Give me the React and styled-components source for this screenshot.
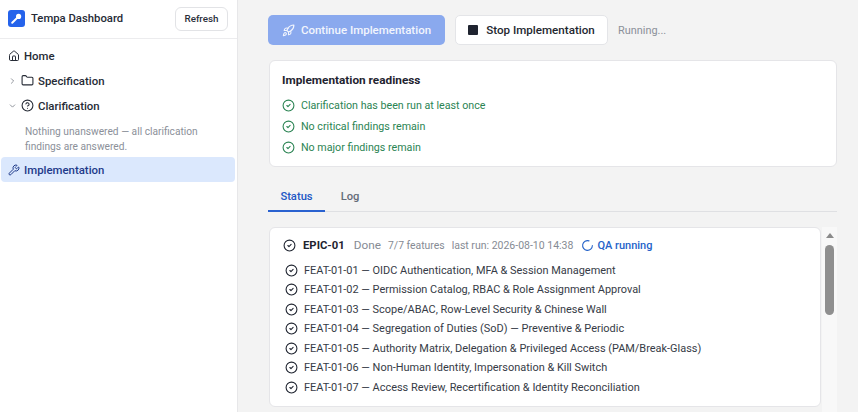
import React from "react";
import styled, { createGlobalStyle } from "styled-components";
import { House, ChevronRight, ChevronDown, Folder, CircleHelp, Wrench, Rocket, CircleCheck, LoaderCircle } from "lucide-react";

const FONT = `Roboto, "Noto Sans", sans-serif`;
const Global = createGlobalStyle`
  html, body { margin: 0; padding: 0; height: 100%; overflow: hidden; background: #f3f3f3; }
  #root { height: 100%; }
  * { box-sizing: border-box; }
`;
const Page = styled.div`
  display: flex; width: 858px; height: 412px; overflow: hidden;
  font-family: ${FONT}; font-size: 11px; color: #1f2430; background: #f3f3f3;
`;
const Sidebar = styled.aside`
  width: 238px; flex: none; background: #fff; border-right: 1px solid #e7e7e9; display: flex; flex-direction: column;
`;
const SideHeader = styled.header`
  height: 39px; flex: none; display: flex; align-items: center; justify-content: space-between;
  padding: 0 9px 1px 8px; border-bottom: 1px solid #ececee;
`;
const Brand = styled.div`display: flex; align-items: center; gap: 6px; font-size: 11.3px; font-weight: 500; color: #262b36;`;
const Logo = styled.div`
  width: 17px; height: 17px; border-radius: 3px; background: #2563eb; display: flex; align-items: center; justify-content: center;
`;
const RefreshButton = styled.button`
  width: 53px; height: 24px; background: #fff; border: 1px solid #e2e3e6; border-radius: 6px;
  font: 500 9.8px ${FONT}; color: #2a2f3a; padding: 0;
`;
const Nav = styled.nav`display: flex; flex-direction: column; padding: 4px 2px 0 1px;`;
const NavRow = styled.div`
  height: 25px; display: flex; align-items: center; gap: 4px; border-radius: 4px; font-size: 11.4px; font-weight: 500;
  padding-left: 7px;
  color: ${p => p.$active ? "#1e3a8a" : "#262b36"};
  background: ${p => p.$active ? "#dbe8fd" : "transparent"};
`;
const Caret = styled.span`width: 9px; display: flex; color: #6f747d;`;
const Note = styled.p`
  margin: 0; padding: 6px 12px 0 24px; font-size: 10.2px; line-height: 15px; color: #8b9099; height: 39px;
`;
const Main = styled.main`flex: 1; min-width: 0; padding: 15px 21px 0 30px; display: flex; flex-direction: column;`;
const Actions = styled.div`display: flex; align-items: center; gap: 10px; height: 30px;`;
const PrimaryButton = styled.button`
  width: 177px; height: 30px; border: 0; border-radius: 5px; background: #8aa9ee; color: #f2f5fd;
  display: flex; align-items: center; justify-content: center; gap: 6px; font: 500 11.5px ${FONT}; padding: 0;
`;
const StopButton = styled.button`
  width: 153px; height: 30px; border: 1px solid #e4e5e8; border-radius: 5px; background: #fff; color: #23272f;
  display: flex; align-items: center; justify-content: center; gap: 8px; font: 500 11.6px ${FONT}; padding: 0;
`;
const StopIcon = styled.span`width: 10px; height: 10px; border-radius: 1px; background: #1f2430;`;
const Status = styled.span`font-size: 10.9px; color: #8b9099;`;
const Card = styled.section`background: #fff; border: 1px solid #e5e5e8; border-radius: 6px;`;
const ReadyCard = styled(Card)`margin: 15px 0 0 1px; height: 107px; padding: 11px 12px;`;
const Title = styled.h2`margin: 0 0 7px; font-size: 11.8px; line-height: 16px; font-weight: 700; color: #1f2430;`;
const CheckRow = styled.div`
  height: 21px; display: flex; align-items: center; gap: 6px; font-size: 10.7px; color: #2b8453;
`;
const Tabs = styled.div`display: flex; margin-top: 17px; height: 28px; border-bottom: 1px solid #dfe0e3;`;
const Tab = styled.div`
  width: ${p => p.$w}px; height: 28px; text-align: center; line-height: 26px; font-size: 11.2px; font-weight: 500;
  color: ${p => p.$active ? "#2257c5" : "#646b78"}; ${p => p.$active && "border-bottom: 2px solid #2a62d0;"}
`;
const Content = styled.div`display: flex; margin-top: 15px; gap: 1px; height: 186px;`;
const EpicCard = styled(Card)`flex: 1; margin-left: 1px; height: 180px; padding: 9px 13px 0;`;
const EpicHead = styled.div`display: flex; align-items: center; height: 16px; color: #868b94; white-space: nowrap;`;
const EpicId = styled.strong`margin: 0 9px 0 7px; font-size: 11.3px; font-weight: 700; color: #1f2430;`;
const Meta = styled.span`margin-right: ${p => p.$m}px; font-size: ${p => p.$s}px;`;
const Qa = styled.span`display: flex; align-items: center; gap: 3px; color: #2563c9; font-weight: 500; font-size: 11px;`;
const FeatList = styled.div`margin-top: 7.5px; padding-left: 2px;`;
const Feat = styled.div`height: 19.5px; display: flex; align-items: center; gap: 6px; font-size: 10.95px; color: #363b46; white-space: nowrap;`;
const Scroll = styled.div`width: 15px; flex: none; background: #f8f8f8; display: flex; flex-direction: column; align-items: center; padding-top: 6px;`;
const Arrow = styled.span`width: 0; height: 0; border-left: 4px solid transparent; border-right: 4px solid transparent; border-bottom: 5px solid #8a8a8a;`;
const Thumb = styled.span`width: 9px; height: 70px; margin-top: 7px; border-radius: 5px; background: #8f8f8f;`;

const feats = [
  "FEAT-01-01 — OIDC Authentication, MFA & Session Management",
  "FEAT-01-02 — Permission Catalog, RBAC & Role Assignment Approval",
  "FEAT-01-03 — Scope/ABAC, Row-Level Security & Chinese Wall",
  "FEAT-01-04 — Segregation of Duties (SoD) — Preventive & Periodic",
  "FEAT-01-05 — Authority Matrix, Delegation & Privileged Access (PAM/Break-Glass)",
  "FEAT-01-06 — Non-Human Identity, Impersonation & Kill Switch",
  "FEAT-01-07 — Access Review, Recertification & Identity Reconciliation",
];
const checks = ["Clarification has been run at least once", "No critical findings remain", "No major findings remain"];

const LogoMark = () => (
  <svg width="13" height="13" viewBox="0 0 13 13" fill="none">
    <path d="M2.2 10.8 L7.4 5.6" stroke="#fff" strokeWidth="2" strokeLinecap="round" />
    <circle cx="8.6" cy="4.4" r="2.6" fill="#fff" />
  </svg>
);

export default function App() {
  return (
    <Page>
      <Global />
      <Sidebar>
        <SideHeader>
          <Brand><Logo><LogoMark /></Logo>Tempa Dashboard</Brand>
          <RefreshButton>Refresh</RefreshButton>
        </SideHeader>
        <Nav>
          <NavRow><House size={12} />Home</NavRow>
          <NavRow><Caret><ChevronRight size={10} /></Caret><Folder size={13} />Specification</NavRow>
          <NavRow><Caret><ChevronDown size={10} /></Caret><CircleHelp size={13} />Clarification</NavRow>
          <Note>Nothing unanswered — all clarification findings are answered.</Note>
          <NavRow $active><Wrench size={12} />Implementation</NavRow>
        </Nav>
      </Sidebar>
      <Main>
        <Actions>
          <PrimaryButton><Rocket size={13} />Continue Implementation</PrimaryButton>
          <StopButton><StopIcon />Stop Implementation</StopButton>
          <Status>Running...</Status>
        </Actions>
        <ReadyCard>
          <Title>Implementation readiness</Title>
          {checks.map(c => <CheckRow key={c}><CircleCheck size={13} />{c}</CheckRow>)}
        </ReadyCard>
        <Tabs><Tab $active $w={57}>Status</Tab><Tab $w={50}>Log</Tab></Tabs>
        <Content>
          <EpicCard>
            <EpicHead>
              <CircleCheck size={13} color="#1f2430" />
              <EpicId>EPIC-01</EpicId>
              <Meta $m={7} $s={11.8}>Done</Meta>
              <Meta $m={7} $s={10.4}>7/7 features</Meta>
              <Meta $m={8} $s={10.5}>last run: 2026-08-10 14:38</Meta>
              <Qa><LoaderCircle size={13} />QA running</Qa>
            </EpicHead>
            <FeatList>
              {feats.map(f => <Feat key={f}><CircleCheck size={13} color="#1f2430" />{f}</Feat>)}
            </FeatList>
          </EpicCard>
          <Scroll><Arrow /><Thumb /></Scroll>
        </Content>
      </Main>
    </Page>
  );
}
